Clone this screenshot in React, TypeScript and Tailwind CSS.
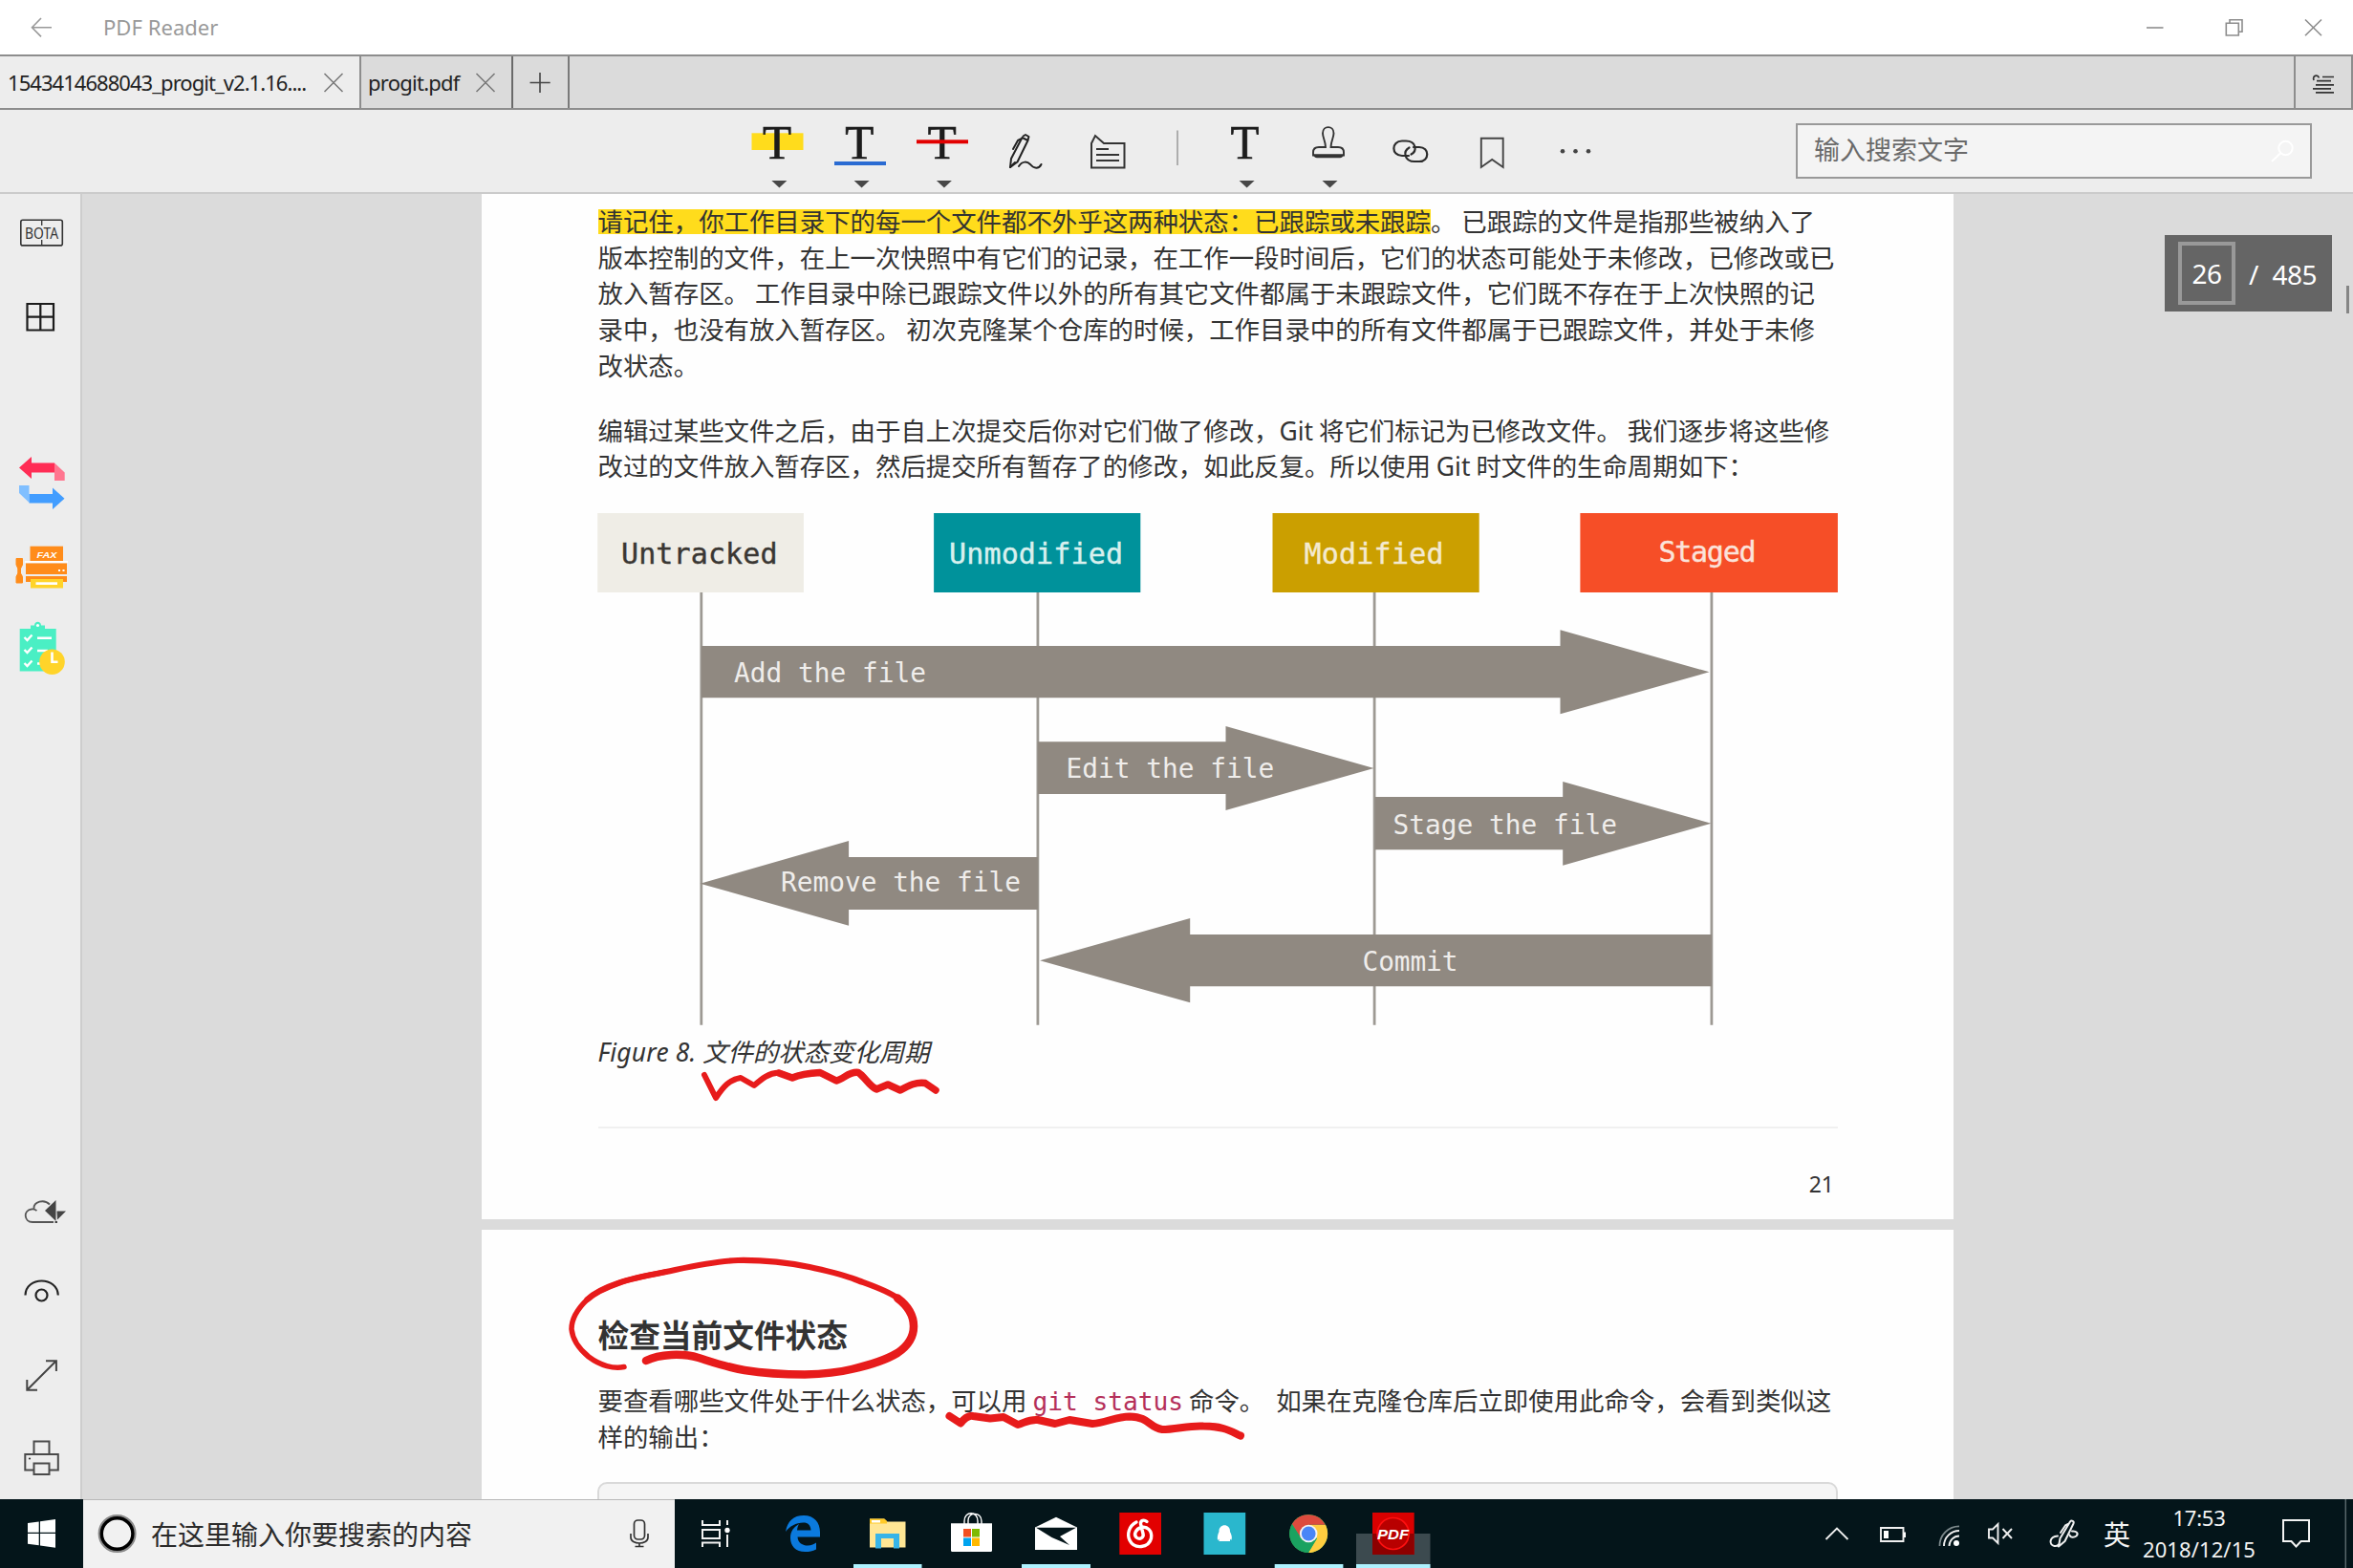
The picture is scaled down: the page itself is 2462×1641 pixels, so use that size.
import React from "react";

const ui = "font-['Noto_Sans','Noto_Sans_CJK_SC',sans-serif]";
const doc = "font-['Noto_Sans','Noto_Sans_CJK_SC',sans-serif]";

type BoxProps = {
  x: number;
  y: number;
  w: number;
  h: number;
  children?: React.ReactNode;
};

/** Icon cell: its drawing uses window coordinates through the viewBox. */
function Cell({ x, y, w, h, children }: BoxProps) {
  return (
    <svg
      className="block shrink-0"
      width={w}
      height={h}
      viewBox={`${x} ${y} ${w} ${h}`}
      fill="none"
    >
      {children}
    </svg>
  );
}

function TitleBar() {
  return (
    <header className="flex h-[57px] shrink-0 items-center justify-between bg-white text-[#999]">
      <div className="flex items-center">
        <Cell x={0} y={0} w={108} h={57}>
          <path d="M33 28.7H54M43 19L33.5 28.7L43 38.4" stroke="#999" strokeWidth="1.6" />
        </Cell>
        <span className="whitespace-nowrap text-[22px] leading-[57px] tracking-[0.05px]">PDF Reader</span>
      </div>
      <Cell x={2212} y={0} w={250} h={57}>
        <g stroke="#8d8d8d" strokeWidth="1.6">
          <path d="M2246 29H2263.500" />
          <path d="M2329.300 24.300H2342.300V37H2329.300ZM2333 24V20.800H2346V33.300H2342.500" />
          <path d="M2412 20.500L2429 37.300M2429 20.500L2412 37.300" />
        </g>
      </Cell>
    </header>
  );
}

function CloseX({ cx }: { cx: number }) {
  return (
    <Cell x={cx - 12} y={59} w={24} h={54}>
      <path
        d={`M${cx - 9.5} 77L${cx + 9.5} 96M${cx + 9.5} 77L${cx - 9.5} 96`}
        stroke="#777"
        strokeWidth="1.5"
      />
    </Cell>
  );
}

function TabBar() {
  return (
    <div className="flex h-[58px] shrink-0 border-y-2 border-[#8d8d8d] bg-[#dbdbdb] text-[22px] leading-[56px] text-[#222]">
      <div className="flex w-[378px] items-center border-r-2 border-[#8d8d8d] bg-[#ededed] pl-[8px]">
        <span className="w-[329px] whitespace-nowrap tracking-[-0.95px]">1543414688043_progit_v2.1.16....</span>
        <CloseX cx={349} />
      </div>
      <div className="flex w-[159px] items-center border-r-2 border-[#6a6a6a] pl-[7px]">
        <span className="w-[111px] whitespace-nowrap tracking-[-0.75px]">progit.pdf</span>
        <CloseX cx={507.500} />
      </div>
      <div className="flex w-[59px] items-center border-r-2 border-[#7a7a7a]">
        <Cell x={537} y={59} w={57} h={54}>
          <path d="M554.500 86.500H575.700M565 76V97" stroke="#444" strokeWidth="1.6" />
        </Cell>
      </div>
      <div className="ml-auto flex w-[62px] items-center border-x-2 border-[#8d8d8d]">
        <Cell x={2402} y={59} w={57} h={54}>
          <path
            d="M2430 80.500H2442M2424 84.600H2439M2423 88.800H2442M2420 92.800H2439M2423 96.900H2442M2421 84C2419 79 2425 77.500 2426.500 81.500"
            stroke="#333"
            strokeWidth="1.7"
          />
        </Cell>
      </div>
    </div>
  );
}

function BigT({ cx }: { cx: number }) {
  return (
    <text
      x={cx}
      y={166.3}
      textAnchor="middle"
      stroke="#1c1c1c"
      strokeWidth={0.7}
      className="fill-[#1c1c1c] font-['Liberation_Serif',serif] text-[51px]"
      textLength={30}
      lengthAdjust="spacingAndGlyphs"
    >
      T
    </text>
  );
}

function Caret({ cx }: { cx: number }) {
  return <path d={`M${cx - 8} 189H${cx + 8}L${cx} 196.500Z`} fill="#484848" />;
}

function Toolbar() {
  return (
    <div className="flex h-[88px] shrink-0 items-center border-b-2 border-[#cbcbcb] bg-[#ededed] pl-[770px]">
      <Cell x={770} y={115} w={86} h={86}>
        <rect x="786.5" y="139.300" width="54" height="17.700" fill="#ffdc1c" />
        <BigT cx={813} />
        <Caret cx={815.400} />
      </Cell>
      <Cell x={856} y={115} w={87} h={86}>
        <BigT cx={899.300} />
        <rect x="873" y="169" width="54" height="4" fill="#2a6bd2" />
        <Caret cx={901.600} />
      </Cell>
      <Cell x={943} y={115} w={86} h={86}>
        <BigT cx={985.800} />
        <rect x="959" y="146.300" width="54" height="4" fill="#e20000" />
        <Caret cx={987.900} />
      </Cell>
      <Cell x={1029} y={115} w={87} h={86}>
        <g stroke="#222" strokeWidth="2" strokeLinejoin="round" strokeLinecap="round">
          <path d="M1057 175L1058 166L1069.500 144L1075.500 147L1064.500 169.500Z" />
          <path d="M1070.500 142.500L1073 141L1076.500 143L1075.500 146.500M1068 145.500L1065 147L1060 156" />
          <path d="M1057 175L1062 170" />
          <path d="M1066 174C1070 168 1075 169 1078 172C1082 177 1087 177 1089.500 172" />
        </g>
      </Cell>
      <Cell x={1116} y={115} w={86} h={86}>
        <g stroke="#333" strokeWidth="2">
          <path d="M1142 175.500V150L1146 142L1155 150H1176.500V175.500Z" />
          <path d="M1147 156H1160M1147 162H1171M1147 168H1171" strokeWidth="1.800" />
        </g>
      </Cell>
      <Cell x={1202} y={115} w={58} h={86}>
        <path d="M1232 136.500V173" stroke="#999" strokeWidth="1.500" />
      </Cell>
      <Cell x={1260} y={115} w={86} h={86}>
        <BigT cx={1302.500} />
        <Caret cx={1304.600} />
      </Cell>
      <Cell x={1346} y={115} w={87} h={86}>
        <path
          d="M1387 154C1387 148 1384 144 1384 139.500C1384 131 1395.500 131 1395.500 139.500C1395.500 144 1392.500 148 1392.500 154H1400C1404 154 1406 156 1406 159.500V162.500H1374V159.500C1374 156 1376 154 1380 154Z"
          stroke="#333"
          strokeWidth="1.900"
        />
        <path d="M1374 161.500H1406C1405.500 164 1404 165.300 1402 165.300H1378C1376 165.300 1374.500 164 1374 161.500Z" fill="#333" />
        <Caret cx={1391.500} />
      </Cell>
      <Cell x={1433} y={115} w={86} h={86}>
        <g stroke="#2b2b2b" strokeWidth="2.200" strokeLinecap="round">
          <path d="M1474 163H1467C1455.500 163 1455.500 147.500 1467 147.500H1471C1482 147.500 1483 158 1476.500 161.500" />
          <path d="M1479 154H1485C1496 154 1496 169 1485 169H1480C1469.500 169 1467.500 158.500 1474.500 154.500" />
        </g>
      </Cell>
      <Cell x={1519} y={115} w={86} h={86}>
        <path d="M1549.800 144.800H1572.700V175L1561.200 167L1549.800 175Z" stroke="#444" strokeWidth="1.900" />
      </Cell>
      <Cell x={1605} y={115} w={87} h={86}>
        <circle cx="1635" cy="158.300" r="2.300" fill="#444" />
        <circle cx="1648.500" cy="158.300" r="2.300" fill="#444" />
        <circle cx="1662" cy="158.300" r="2.300" fill="#444" />
      </Cell>
      <div className="ml-auto mr-[43px] flex h-[58px] w-[540px] items-center justify-between border-2 border-[#999] bg-[#f4f4f4] pl-[17px] pr-[16px]">
        <span className="mb-[5px] text-[27px] leading-[40px] text-[#6a6a6a] font-['Noto_Sans_CJK_SC',sans-serif]">输入搜索文字</span>
        <Cell x={2375} y={144} w={26} h={28}>
          <circle cx="2391.500" cy="155" r="7.200" stroke="#fff" strokeWidth="2" />
          <path d="M2386.500 160L2377 169" stroke="#fff" strokeWidth="2" />
        </Cell>
      </div>
    </div>
  );
}

function Sidebar() {
  return (
    <aside className="flex w-[86px] shrink-0 flex-col border-r-2 border-[#cdcdcd] bg-[#ededed]">
      <Cell x={0} y={203} w={84} h={84}>
        <rect x="21.800" y="230.300" width="43.500" height="26.600" rx="2" stroke="#333" strokeWidth="1.600" />
        <path d="M43.700 230V236M43.700 251V257" stroke="#333" strokeWidth="1.300" />
        <text x="26" y="250" textLength="35" lengthAdjust="spacingAndGlyphs" className="fill-[#333] font-['Noto_Sans',sans-serif] text-[15.5px]">
          BOTA
        </text>
      </Cell>
      <Cell x={0} y={287} w={84} h={88}>
        <path d="M28.500 318H56V345.500H28.500ZM42.300 318V345.500M28.500 331.700H56" stroke="#1c1c1c" strokeWidth="2.200" />
      </Cell>
      <div className="h-[86px] shrink-0" />
      <Cell x={0} y={461} w={84} h={88}>
        <path d="M57 484.500L67.700 494.500V503H57Z" fill="#ff7690" />
        <path d="M20 489.500L33 478V484.500H57V494.500H33V501Z" fill="#ff2d55" />
        <path d="M20 508H30.500V526L20 516Z" fill="#80bfff" />
        <path d="M30.500 517H55V510.500L67.500 521.700L55 533V526.500H30.500Z" fill="#429dff" />
      </Cell>
      <Cell x={0} y={549} w={84} h={88}>
        <rect x="31.500" y="571.700" width="34.500" height="15.500" fill="#ff8c1a" />
        <text x="38.500" y="583.800" textLength="21" lengthAdjust="spacingAndGlyphs" className="fill-white font-['Liberation_Sans',sans-serif] text-[9.5px] font-bold italic">
          FAX
        </text>
        <path d="M26 588H71" stroke="#fff" strokeWidth="2" />
        <path d="M27 589.500H70V601H27ZM27 603H70V609H27Z" fill="#ff8c1a" />
        <path d="M17 584.500H23.500V591L21.500 595V600L23.500 603.500V610H17V603.500L18.800 600V595L17 591Z" fill="#ff8c1a" stroke="#ff8c1a" />
        <path d="M61 597H63M65.500 597H67.500" stroke="#fff" strokeWidth="1.800" />
        <rect x="32" y="606" width="34" height="9.500" fill="#ffd42a" />
        <rect x="37.500" y="609.300" width="22.500" height="2.700" fill="#fff" />
      </Cell>
      <Cell x={0} y={637} w={84} h={88}>
        <path d="M20.700 658H32V654.500H36C36 649.500 43 649.500 43 654.500H47V658H58.700V702.500H20.700Z" fill="#4aefc4" />
        <circle cx="39.500" cy="654.500" r="1.600" fill="#fff" />
        <g stroke="#fff" strokeWidth="2.400">
          <path d="M25.500 667L28.500 670L33.500 664.500M25.500 680L28.500 683L33.500 677.500M25.500 694L28.500 697L33.500 691.500" />
          <path d="M39 667.700H54M39 681H50M39 694.500H44" />
        </g>
        <circle cx="54.500" cy="692.700" r="13.300" fill="#ffd42a" />
        <path d="M54.500 682.500V692.700H60.500" stroke="#fff" strokeWidth="2.600" />
      </Cell>
      <div className="grow" />
      <Cell x={0} y={1224} w={84} h={81}>
        <path
          d="M56 1279H34C25 1279 24 1266.500 33 1265.500C35 1265.300 37 1266 38.500 1267M35.500 1265C35 1257.500 46 1254.500 52 1260.500"
          stroke="#555"
          strokeWidth="1.800"
        />
        <path d="M47 1267L58.500 1256V1278Z" fill="#444" />
        <path d="M59.500 1267.500H69L60 1276.500ZM57.500 1278H60V1280H57.500Z" fill="#444" />
      </Cell>
      <Cell x={0} y={1305} w={84} h={90}>
        <path d="M26.500 1355.500C27 1335.500 60 1335.500 60.800 1355.500" stroke="#222" strokeWidth="2.200" />
        <circle cx="43.500" cy="1355.500" r="6" stroke="#222" strokeWidth="2.200" />
      </Cell>
      <Cell x={0} y={1395} w={84} h={87}>
        <path d="M28.500 1454.500L58.500 1424.500M48 1424.200H58.900V1435M28.300 1444V1454.700H39" stroke="#444" strokeWidth="2" />
      </Cell>
      <Cell x={0} y={1482} w={84} h={87}>
        <path
          d="M35.500 1522V1508.500H51.500V1522M35 1538.500H26.300V1522H60.800V1538.500H52M35.500 1531.500H51.500V1543H35.500Z"
          stroke="#4a4a4a"
          strokeWidth="2"
        />
        <circle cx="31" cy="1526.500" r="1.100" fill="#333" />
      </Cell>
    </aside>
  );
}

function Lines({ rows }: { rows: React.ReactNode[] }) {
  return (
    <div className="text-[26.41px] leading-[37.7px] text-[#333] [word-spacing:-0.9px]">
      {rows.map((row, i) => (
        <p key={i} className="whitespace-nowrap">
          {row}
        </p>
      ))}
    </div>
  );
}

const states = [
  { x: 625.7, w: 215.7, line: 734.3, fill: "#efede6", ink: "#3a3733", tx: 650.5, ty: 590, tw: 163.5, label: "Untracked" },
  { x: 977.6, w: 216.2, line: 1086.4, fill: "#00929b", ink: "#d9f0ee", tx: 993.5, ty: 590, tw: 182, label: "Unmodified" },
  { x: 1332, w: 216.2, line: 1438.6, fill: "#cb9f00", ink: "#f4ead0", tx: 1365, ty: 590, tw: 146, label: "Modified" },
  { x: 1653.9, w: 269.5, line: 1791.4, fill: "#f64e27", ink: "#fbe3da", tx: 1736, ty: 587.7, tw: 102, label: "Staged" },
];

const moves = [
  { d: "M734.300 676H1633V659.300L1789 703.300L1633 747.300V730.300H734.300Z", tx: 768.5, ty: 714, tw: 201, label: "Add the file" },
  { d: "M1086.400 776.300H1283V760L1438 804L1283 848V831H1086.400Z", tx: 1116, ty: 814, tw: 217.7, label: "Edit the file" },
  { d: "M1439 834H1635.700V818L1791 861.700L1635.700 905.700V889.300H1439Z", tx: 1458, ty: 872.7, tw: 234.5, label: "Stage the file" },
  { d: "M1086.400 897H888.600V880L733 924.700L888.600 968.700V952H1086.400Z", tx: 817.5, ty: 933, tw: 251, label: "Remove the file" },
  { d: "M1791.400 978H1245.700V961L1088.600 1005.300L1245.700 1049.300V1032.300H1791.400Z", tx: 1426, ty: 1015.5, tw: 100, label: "Commit" },
];

function Lifecycle() {
  return (
    <Cell x={625.5} y={536} w={1300} h={538}>
      {states.map((s) => (
        <g key={s.label}>
          <path d={`M${s.line} 620V1072.700`} stroke="#9d9993" strokeWidth="2.800" />
          <rect x={s.x} y={537} width={s.w} height={83} fill={s.fill} />
          <text
            x={s.tx}
            y={s.ty}
            textLength={s.tw}
            fill={s.ink}
            stroke={s.ink}
            strokeWidth={0.4}
            className="font-['DejaVu_Sans_Mono',monospace] text-[30px]"
          >
            {s.label}
          </text>
        </g>
      ))}
      {moves.map((m) => (
        <g key={m.label}>
          <path d={m.d} fill="#908981" />
          <text x={m.tx} y={m.ty} textLength={m.tw} className="fill-[#efedeb] font-['DejaVu_Sans_Mono',monospace] text-[27.8px]">
            {m.label}
          </text>
        </g>
      ))}
    </Cell>
  );
}

function Ink() {
  return (
    <svg className="pointer-events-none absolute left-0 top-0" width="1540" height="1366" viewBox="504 203 1540 1366" fill="none">
      <g stroke="#e71b1b" strokeLinecap="round" strokeLinejoin="round">
        <path
          d="M737 1125L749 1149C757 1137 763 1130 775 1128L789 1136C797 1129 804 1123 815 1122.500L829 1128C838 1124 848 1123 858 1122.500L875 1131"
          strokeWidth="6"
        />
        <path d="M815 1123L829 1128C838 1124 848 1123 858 1122.500L875 1131C883 1129 889 1121 898 1122.500C905 1127 909 1136 917 1140L929 1135L942 1141C951 1136 959 1132 968 1133.500L979 1141" strokeWidth="7.500" />
        <path
          d="M676 1424C690 1417 714 1416 731 1421C747 1426 761 1431 779 1434C798 1437 820 1438.500 842 1438.500C860 1438 875 1437 891 1433C913 1428 929 1422 939 1416C951 1408 956 1398 956 1388C956 1375 949 1366 939 1358.500"
          strokeWidth="8.500"
        />
        <path
          d="M956 1388C956 1375 949 1366 939 1358.500C928 1350 905 1343 895 1339C880 1333 865 1330 847 1326C822 1321 800 1318.500 772 1319C746 1320 721 1326 697 1331C676 1335 660 1338 648 1342.500C632 1348 622 1353 614.500 1360"
          strokeWidth="6.200"
        />
        <path d="M697 1331C676 1335 660 1338 648 1342.500C632 1348 622 1353 614.500 1360C604 1370 598 1380 598 1391C599 1401 605 1411 616 1420C628 1429 642 1433 653 1430.500" strokeWidth="5.500" />
        <path
          d="M993.500 1482L1005 1489.500C1009 1485 1013 1481 1018 1482L1036 1484.500L1050 1483L1065 1491C1072 1489 1077 1485 1086 1486L1104 1490L1119 1486L1143 1490C1157 1489 1168 1482.500 1182 1482.500C1203 1483 1202 1494 1216 1496C1230 1496 1245 1491.500 1259 1492.500C1280 1492.500 1288 1498 1298 1502.500"
          strokeWidth="8"
        />
      </g>
    </svg>
  );
}

function Pages() {
  return (
    <div className={`relative flex w-[1540px] flex-col overflow-hidden ${doc}`}>
      <section className="flex h-[1073px] shrink-0 flex-col bg-[#fefefe] pl-[121.500px] pr-[121px] pt-[11px]">
        <Lines
          rows={[
            <>
              <span className="inline-block h-[26px] bg-[#ffdc1c] leading-[26px]">
                请记住，你工作目录下的每一个文件都不外乎这两种状态：已跟踪或未跟踪
              </span>
              。 已跟踪的文件是指那些被纳入了
            </>,
            "版本控制的文件，在上一次快照中有它们的记录，在工作一段时间后，它们的状态可能处于未修改，已修改或已",
            "放入暂存区。 工作目录中除已跟踪文件以外的所有其它文件都属于未跟踪文件，它们既不存在于上次快照的记",
            "录中，也没有放入暂存区。 初次克隆某个仓库的时候，工作目录中的所有文件都属于已跟踪文件，并处于未修",
            "改状态。",
          ]}
        />
        <div className="mt-[30px]">
          <Lines
            rows={[
              "编辑过某些文件之后，由于自上次提交后你对它们做了修改，Git 将它们标记为已修改文件。 我们逐步将这些修",
              "改过的文件放入暂存区，然后提交所有暂存了的修改，如此反复。所以使用 Git 时文件的生命周期如下：",
            ]}
          />
        </div>
        <div className="-ml-[0.5px] -mr-4 mt-[28px]">
          <Lifecycle />
        </div>
        <p className="mt-[8px] whitespace-nowrap text-[26.4px] italic leading-[38px] text-[#333]">
          <span className="inline-block w-[109.500px] tracking-[0.200px]">Figure 8.</span>文件的状态变化周期
        </p>
        <div className="mt-[59px] h-[2px] shrink-0 bg-[#f0f0f0]" />
        <p className="mt-[41px] pr-[4px] text-right text-[23px] leading-[34px] text-[#333]">21</p>
      </section>
      <div className="h-[11px] shrink-0 bg-[#dbdbdb]" />
      <section className="flex shrink-0 grow flex-col bg-[#fefefe] pl-[121.500px] pr-[121px] pt-[90px]">
        <h2 className="whitespace-nowrap text-[32.700px] font-bold leading-[42px] text-[#333]">检查当前文件状态</h2>
        <div className="mt-[29px]">
          <Lines
            rows={[
              <>
                要查看哪些文件处于什么状态，可以用{" "}
                <code className="text-[26.200px] leading-none text-[#b5305a] [word-spacing:0px] font-['DejaVu_Sans_Mono',monospace]">git status</code>{" "}
                命令。 &nbsp;如果在克隆仓库后立即使用此命令，会看到类似这
              </>,
              "样的输出：",
            ]}
          />
        </div>
        <div className="-ml-px mt-[28px] h-[60px] rounded-[10px] border-2 border-[#d9d9d9] bg-[#f5f5f5]" />
      </section>
      <Ink />
    </div>
  );
}

function Viewer() {
  return (
    <main className="relative flex grow bg-[#dbdbdb] pl-[418px]">
      <Pages />
      <div className="absolute right-[22px] top-[43px] flex h-[80px] w-[175px] items-center bg-[#656565] pl-[14px] text-[28px] text-white">
        <span className="flex h-[66px] w-[60px] items-center justify-center border-4 border-[#999] tracking-[-0.500px]">26</span>
        <span className="ml-[14px] mt-[2px]">/</span>
        <span className="ml-[14px] mt-[2px] tracking-[-0.500px]">485</span>
      </div>
      <div className="absolute right-[4px] top-[96px] h-[29px] w-[3px] bg-[#858585]" />
    </main>
  );
}

function TaskIcons() {
  return (
    <Cell x={706} y={1569} w={840} h={72}>
      <g stroke="#f2f2f2" strokeWidth="2">
        <path d="M735 1591V1596H753V1591M735 1601H753V1610H735ZM735 1619V1614.500H753V1619M761 1591V1596M761 1606V1619" />
      </g>
      <circle cx="761" cy="1601.500" r="2.700" fill="#fff" />

      <path
        d="M822 1603C824 1592 830 1586 841 1586C852 1586 858 1593.500 858 1603.500V1608.500H834.500C835 1615 840 1617.500 845 1617.500C849 1617.500 852 1616 854 1614.500V1621.500C850 1623.500 847 1624 842.500 1624C832.500 1624 827 1618 827 1609.500C827 1602 831 1598 836 1595C834.800 1597 834.300 1599 834 1601.500H848.500C848 1596 845.500 1593.500 840.500 1593.500C833 1593.500 826 1597.500 822 1603Z"
        fill="#0b7ade"
      />

      <path d="M910 1589.500H925L928.500 1592.500H947.500V1619.500H910Z" fill="#ffe694" />
      <path d="M910 1589.500H925.500L928 1592V1594.500H910Z" fill="#ffca28" />
      <rect x="912" y="1591" width="9" height="2.500" fill="#fff" />
      <path d="M916 1620.500V1605H941V1620.500H935V1610H922V1620.500Z" fill="#37b4e8" />

      <path d="M1009 1596V1592C1009 1581 1023 1581 1023 1592V1596M1013 1596V1591C1013 1582 1027 1582 1027 1592V1596" stroke="#fff" strokeWidth="1.400" />
      <path d="M995 1594.300H1038V1622.500Q1038 1624 1036.500 1624H996.500Q995 1624 995 1622.500Z" fill="#fff" />
      <path d="M1008 1600H1016V1608.500H1008Z" fill="#f25022" />
      <path d="M1017 1600H1025V1608.500H1017Z" fill="#7fba00" />
      <path d="M1008 1609.500H1016V1618H1008Z" fill="#00a4ef" />
      <path d="M1017 1609.500H1025V1618H1017Z" fill="#ffb900" />

      <path d="M1083 1598.500L1105 1587.700L1127 1598.500V1622H1083Z" fill="#fff" />
      <path d="M1084 1598.800H1126L1109 1608L1119 1617L1100.500 1609Z" fill="#04151a" />

      <rect x="1171.300" y="1583" width="43.700" height="44" fill="#e20000" />
      <path
        d="M1189 1593C1181 1597 1179 1606 1182 1612C1187 1622 1202 1620 1204.500 1610C1206 1602 1200 1597 1194.500 1598.500C1188 1600 1186 1606 1189 1609C1193 1612 1197 1609 1196 1605L1193.500 1595C1193 1591 1197 1590 1200 1592.500"
        stroke="#fff"
        strokeWidth="3.400"
        strokeLinecap="round"
      />

      <rect x="1259.500" y="1583" width="43.700" height="44" fill="#2ab7cd" />
      <path d="M1275.500 1603C1275 1594 1287.500 1594 1287 1603C1288.500 1606 1289.500 1609 1288.500 1611.500C1288 1612 1287.300 1611 1287 1610.500V1613H1275.500V1610.500C1275 1611.500 1274.500 1612 1274 1611.500C1273.500 1609 1274 1606 1275.500 1603Z" fill="#fff" />

      <circle cx="1369.200" cy="1605" r="20" fill="#4caf50" />
      <path d="M1369.200 1596H1387A20 20 0 0 1 1369 1625L1378 1610Z" fill="#ffcd40" />
      <path d="M1351.900 1595A20 20 0 0 1 1386.800 1595.800H1369.200L1361 1610Z" fill="#dd4b3e" />
      <path d="M1351.900 1595L1361.300 1609.600L1378 1610L1369 1625A20 20 0 0 1 1351.900 1595Z" fill="#1aa260" />
      <circle cx="1369.200" cy="1605" r="9.300" fill="#f4f4f4" />
      <circle cx="1369.200" cy="1605" r="7.400" fill="#4a86f7" />

      <rect x="1419" y="1605" width="77.500" height="36" fill="#3c4a4f" />
      <rect x="1436" y="1583" width="43.700" height="44" fill="#d90000" />
      <rect x="1436" y="1605" width="43.700" height="22" fill="#8d0000" />
      <circle cx="1457.700" cy="1605" r="16.500" fill="#b80000" stroke="#ff1010" strokeWidth="1.700" />
      <text x="1441" y="1611" textLength="33" lengthAdjust="spacingAndGlyphs" className="fill-white font-['Liberation_Sans',sans-serif] text-[15.500px] font-bold italic">
        PDF
      </text>

      <g fill="#aef2ff">
        <rect x="893" y="1637" width="71.500" height="4" />
        <rect x="1069" y="1637" width="72" height="4" />
        <rect x="1333.700" y="1637" width="71.700" height="4" />
        <rect x="1419" y="1637" width="77.500" height="4" />
      </g>
    </Cell>
  );
}

function Tray() {
  return (
    <div className="ml-auto flex items-center text-[#f3f3f3]">
      <Cell x={1890} y={1569} w={311} h={72}>
        <g stroke="#f0f0f0" strokeWidth="1.900">
          <path d="M1910.500 1611L1922 1599.500L1933.500 1611" />
          <path d="M1968 1599H1991.500V1613H1968Z" />
          <path d="M2081 1600.500H2085L2090.500 1595V1615L2085 1609.500H2081Z" />
          <path d="M2095.500 1600L2105 1610M2105 1600L2095.500 1610" />
          <path d="M2034 1618A16 16 0 0 1 2050 1602" />
          <path d="M2039.500 1618A10.500 10.500 0 0 1 2050 1607.500" />
        </g>
        <path d="M2029.500 1618A20.500 20.500 0 0 1 2050 1597.300" stroke="#7c888b" strokeWidth="1.800" />
        <path d="M1971 1602H1976V1610H1971ZM1992 1603.500H1994V1609H1992Z" fill="#fff" />
        <circle cx="2047" cy="1615" r="3" fill="#fff" />
        <g stroke="#f0f0f0" strokeWidth="2" strokeLinejoin="round" strokeLinecap="round">
          <path d="M2154 1618.500L2155.500 1610L2166 1592.500C2167.500 1590.500 2170.500 1592 2169.500 1594.500L2160.500 1613Z" />
          <path d="M2164 1595L2161 1596.500L2156 1604" />
          <path d="M2153 1607.500C2144 1608 2143.500 1617 2149.500 1618C2151.500 1618.300 2153 1617.500 2154 1616.500" />
          <path d="M2168 1602.500C2173 1602 2175 1605 2172.500 1607.500C2170 1609.500 2166 1609 2165.500 1606.500" />
        </g>
      </Cell>
      <span className="w-[40px] text-[28px] leading-[40px] font-['Noto_Sans_CJK_SC',sans-serif]">英</span>
      <div className="flex w-[120px] flex-col items-center text-[22px] leading-[33px]">
        <span className="tracking-[-0.200px]">17:53</span>
        <span className="tracking-[0.1px]">2018/12/15</span>
      </div>
      <Cell x={2361} y={1569} w={101} h={72}>
        <path d="M2389 1591H2416V1613H2407.500L2402.500 1618.500L2397.500 1613H2389Z" stroke="#f3f3f3" strokeWidth="2" />
        <path d="M2454.300 1569V1641" stroke="#59676b" strokeWidth="1.500" />
      </Cell>
    </div>
  );
}

function Taskbar() {
  return (
    <footer className="flex h-[72px] shrink-0 bg-[#04151a]">
      <Cell x={0} y={1569} w={87} h={72}>
        <path
          d="M29 1594L40.700 1592.500V1603.700H29ZM42 1592.300L58 1590V1603.700H42ZM29 1605H40.700V1617.300L29 1615.700ZM42 1605H58V1619.700L42 1617.500Z"
          fill="#fff"
        />
      </Cell>
      <div className="flex w-[619px] items-center border-t border-[#b8b8b8] bg-[#f1f1f1]">
        <Cell x={87} y={1570} w={71} h={71}>
          <circle cx="122.600" cy="1605" r="18" stroke="#8a8a8a" strokeWidth="4" />
          <circle cx="122.600" cy="1605" r="16.300" stroke="#000" strokeWidth="3.400" />
        </Cell>
        <span className="mb-[2px] w-[491px] whitespace-nowrap text-[28px] leading-[40px] text-[#2b2b2b] font-['Noto_Sans_CJK_SC',sans-serif]">
          在这里输入你要搜索的内容
        </span>
        <Cell x={649} y={1570} w={50} h={71}>
          <rect x="663.500" y="1591" width="11" height="20" rx="4" stroke="#333" strokeWidth="1.700" />
          <path d="M660 1605V1609C660 1617 678 1617 678 1609V1605M669 1615V1618.500M664.500 1618.500H673.500" stroke="#333" strokeWidth="1.700" />
        </Cell>
      </div>
      <TaskIcons />
      <Tray />
    </footer>
  );
}

export default function App() {
  return (
    <div className={`flex h-[1641px] w-[2462px] flex-col overflow-hidden bg-white ${ui}`}>
      <TitleBar />
      <TabBar />
      <Toolbar />
      <div className="flex h-[1366px] shrink-0 overflow-hidden">
        <Sidebar />
        <Viewer />
      </div>
      <Taskbar />
    </div>
  );
}
